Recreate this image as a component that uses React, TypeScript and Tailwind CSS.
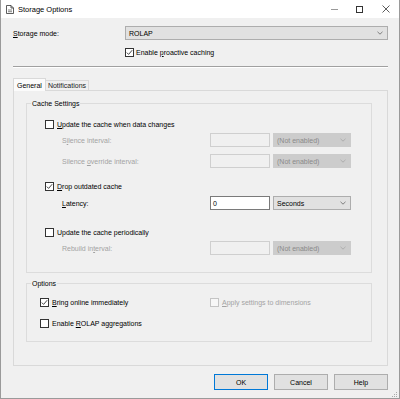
import React from "react";

const Check: React.FC<{ checked?: boolean; disabled?: boolean }> = ({ checked, disabled }) => (
  <span
    className={`w-[9px] h-[9px] shrink-0 border flex items-center justify-center ${
      disabled ? "border-[#c4c4c4] bg-[#f7f7f7]" : "border-[#333333] bg-white"
    }`}
  >
    {checked && (
      <svg width="7" height="7" viewBox="0 0 7 7">
        <path d="M0.8 3.6 L2.6 5.4 L6.2 1.2" fill="none" stroke="#333" strokeWidth="0.9" />
      </svg>
    )}
  </span>
);

const Chevron: React.FC<{ color?: string }> = ({ color = "#555" }) => (
  <svg width="6" height="4" viewBox="0 0 6 4" className="shrink-0">
    <path d="M0.5 0.8 L3 3.2 L5.5 0.8" fill="none" stroke={color} strokeWidth="0.7" />
  </svg>
);

const Combo: React.FC<{ text: string; disabled?: boolean; className?: string }> = ({
  text,
  disabled,
  className = "",
}) => (
  <div
    className={`h-[14px] flex items-center justify-between pl-[3px] pr-[4px] border ${
      disabled ? "bg-[#cccccc] border-[#cccccc] text-[#8a8a8a]" : "bg-[#e1e1e1] border-[#adadad] text-black"
    } ${className}`}
  >
    <span>{text}</span>
    <Chevron color={disabled ? "#a0a0a0" : "#555"} />
  </div>
);

const Field: React.FC<{ value?: string; disabled?: boolean }> = ({ value, disabled }) => (
  <div
    className={`w-[60px] h-[14px] border flex items-center px-[2px] ${
      disabled ? "bg-[#f0f0f0] border-[#cfcfcf]" : "bg-white border-[#7a7a7a]"
    }`}
  >
    {value}
  </div>
);

const U: React.FC<{ children: React.ReactNode }> = ({ children }) => <span className="underline">{children}</span>;

const IntervalRow: React.FC<{ label: React.ReactNode; mt: string }> = ({ label, mt }) => (
  <div className={`h-[14px] flex items-center ${mt}`}>
    <span className="w-[165px] pl-[17px] text-[#a3a3a3]">{label}</span>
    <Field disabled />
    <Combo text="(Not enabled)" disabled className="w-[78px] ml-[3px]" />
  </div>
);

export default function App() {
  return (
    <div className="w-[400px] h-[399px] flex flex-col bg-[#f0f0f0] border-x border-b border-[#9a9a9a] font-['Liberation_Sans',Arial,sans-serif] text-[7px] leading-[9px] text-black overflow-hidden">
      {/* title bar */}
      <div className="h-[18px] bg-white flex items-center shrink-0">
        <svg width="8" height="9" viewBox="0 0 8 9" className="ml-[5px]">
          <path d="M0.5 0.5 H5 L7.5 3 V8.5 H0.5 Z" fill="white" stroke="#333" strokeWidth="0.8" />
          <path d="M5 0.5 V3 H7.5" fill="none" stroke="#333" strokeWidth="0.8" />
          <path d="M2 5 H6 M2 6.7 H6" stroke="#333" strokeWidth="0.6" />
        </svg>
        <span className="ml-[4px] text-[7.5px]">Storage Options</span>
        <div className="ml-auto flex items-center h-full">
          <div className="w-[24px] h-full flex items-center justify-center">
            <div className="w-[7px] h-px bg-[#999]" />
          </div>
          <div className="w-[26px] h-full flex items-center justify-center">
            <div className="w-[7px] h-[7px] border border-[#333]" />
          </div>
          <div className="w-[27px] h-full flex items-center justify-center">
            <svg width="8" height="8" viewBox="0 0 8 8">
              <path d="M0.5 0.5 L7.5 7.5 M7.5 0.5 L0.5 7.5" stroke="#333" strokeWidth="0.8" />
            </svg>
          </div>
        </div>
      </div>

      {/* body */}
      <div className="flex-1 flex flex-col pl-[11px] pr-[11px]">
        <div className="h-[14px] mt-[8px] flex items-center">
          <span className="w-[113px] pl-[1px]">
            <U>S</U>torage mode:
          </span>
          <Combo text="ROLAP" className="flex-1" />
        </div>
        <div className="h-[12px] mt-[6px] flex items-center gap-[2px] pl-[113px]">
          <Check checked />
          <span>
            Enable <U>p</U>roactive caching
          </span>
        </div>
        <div className="mt-[8px] h-[2px] border-t border-[#a0a0a0] border-b border-b-white ml-[1px]" />

        {/* tabs */}
        <div className="mt-[9px] h-[13px] flex items-end pl-[1px]">
          <div className="h-[13px] px-[3px] flex items-center bg-[#fbfbfb] border-x border-t border-[#d9d9d9] relative top-px z-10">
            General
          </div>
          <div className="h-[10px] px-[2px] flex items-center bg-[#f0f0f0] border-r border-t border-[#d9d9d9] text-[#222]">
            Notifications
          </div>
        </div>

        <div className="ml-[1px] h-[276px] border border-[#d9d9d9] bg-[#f0f0f0] pl-[12px] pr-[15px] pt-[8px]">
          <fieldset className="h-[174px] border border-[#dcdcdc] px-[18px]">
            <legend className="ml-[-14px] px-[1px] leading-[9px]">Cache Settings</legend>
            <div className="h-[14px] mt-[9px] flex items-center gap-[3px]">
              <Check />
              <span>
                <U>U</U>pdate the cache when data changes
              </span>
            </div>
            <IntervalRow
              mt="mt-[2px]"
              label={
                <>
                  S<U>i</U>lence interval:
                </>
              }
            />
            <IntervalRow
              mt="mt-[7px]"
              label={
                <>
                  Silence <U>o</U>verride interval:
                </>
              }
            />
            <div className="h-[14px] mt-[11px] flex items-center gap-[3px]">
              <Check checked />
              <span>
                <U>D</U>rop outdated cache
              </span>
            </div>
            <div className="h-[14px] mt-[3px] flex items-center">
              <span className="w-[165px] pl-[17px]">
                <U>L</U>atency:
              </span>
              <Field value="0" />
              <Combo text="Seconds" className="w-[78px] ml-[3px]" />
            </div>
            <div className="h-[14px] mt-[15px] flex items-center gap-[3px]">
              <Check />
              <span>Update the cache periodically</span>
            </div>
            <IntervalRow
              mt="mt-[2px]"
              label={
                <>
                  Rebuild in<U>t</U>erval:
                </>
              }
            />
          </fieldset>

          <fieldset className="h-[63px] mt-[6px] border border-[#dcdcdc] px-[13px]">
            <legend className="ml-[-9px] px-[1px] leading-[9px]">Options</legend>
            <div className="h-[14px] mt-[7px] flex items-center">
              <div className="w-[170px] flex items-center gap-[3px]">
                <Check checked />
                <span>
                  <U>B</U>ring online immediately
                </span>
              </div>
              <div className="flex items-center gap-[3px] text-[#a3a3a3]">
                <Check disabled />
                <span>
                  <U>A</U>pply settings to dimensions
                </span>
              </div>
            </div>
            <div className="h-[14px] mt-[7px] flex items-center gap-[3px]">
              <Check />
              <span>
                Enable <U>R</U>OLAP aggregations
              </span>
            </div>
          </fieldset>
        </div>

        {/* buttons */}
        <div className="mt-[8px] flex justify-end gap-[6px]">
          <button className="w-[54px] h-[16px] border border-[#0078d7] bg-[#e1e1e1] text-[7px] leading-none">OK</button>
          <button className="w-[54px] h-[16px] border border-[#adadad] bg-[#e1e1e1] text-[7px] leading-none">Cancel</button>
          <button className="w-[54px] h-[16px] border border-[#adadad] bg-[#e1e1e1] text-[7px] leading-none">Help</button>
        </div>
        <div className="flex justify-end mt-[2px] mr-[-10px]">
          <svg width="6" height="6" viewBox="0 0 6 6">
            <rect x="4" y="0" width="1" height="1" fill="#aaa" />
            <rect x="2" y="2" width="1" height="1" fill="#aaa" />
            <rect x="4" y="2" width="1" height="1" fill="#aaa" />
            <rect x="0" y="4" width="1" height="1" fill="#aaa" />
            <rect x="2" y="4" width="1" height="1" fill="#aaa" />
            <rect x="4" y="4" width="1" height="1" fill="#aaa" />
          </svg>
        </div>
      </div>
    </div>
  );
}
